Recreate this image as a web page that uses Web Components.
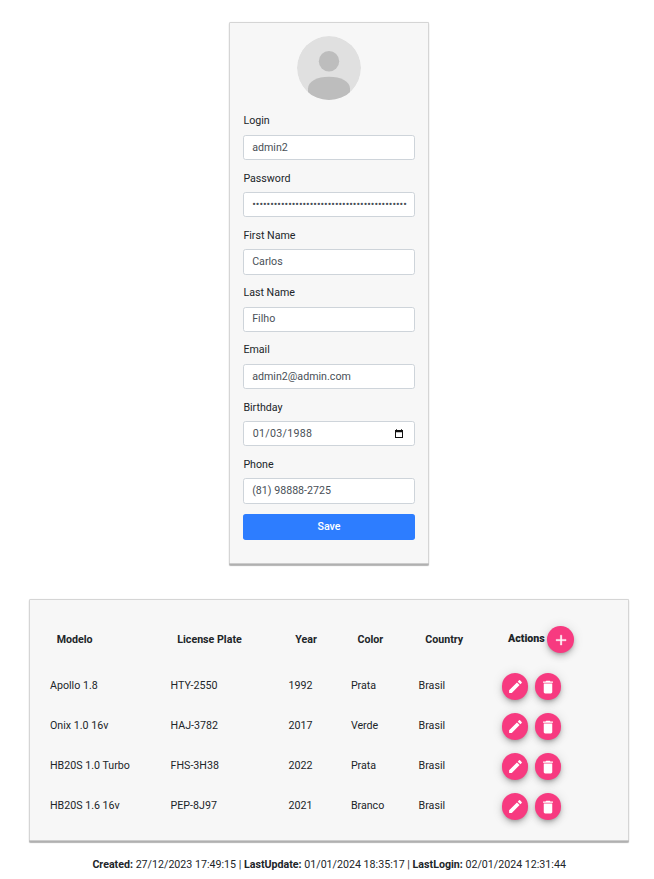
<!DOCTYPE html>
<html lang="en">
<head>
<meta charset="utf-8">
<title>Profile</title>
<style>
body{margin:0;background:#fff;color:#212529;font:10.667px/16px Roboto,sans-serif}
</style>
</head>
<body>
<profile-page></profile-page>
<script>
const define = (name, html, setup) => customElements.define(name, class extends HTMLElement {
  connectedCallback() {
    if (this.shadowRoot) return;
    const root = this.attachShadow({mode: 'open'});
    root.innerHTML = html;
    if (setup) setup(this, root);
  }
});

define('surface-card', `<style>
:host{display:block;box-sizing:border-box;background:#f7f7f7;border:1px solid #d5d5d5;border-bottom-color:#ccc;border-radius:1.5px;box-shadow:0 1.6px 1px rgba(0,0,0,.3),0 0 1px rgba(0,0,0,.12)}
</style><slot></slot>`);

define('user-avatar', `<style>
:host{display:block;width:64px;height:64px;border-radius:50%;overflow:hidden}
svg{display:block}
</style><svg width="64" height="64" viewBox="0 0 64 64"><circle cx="32" cy="32" r="32" fill="#e0e0e0"/><circle cx="32" cy="25.2" r="10.2" fill="#bdbdbd"/><path d="M11 64V52.5C11 45.5 20 40.8 32 40.8S53 45.5 53 52.5V64Z" fill="#bdbdbd"/></svg>`);

define('form-field', `<style>
:host{display:block;margin-bottom:10.58px}
.label{margin-bottom:5.33px;padding-left:.4px}
.box{box-sizing:border-box;height:25.33px;border:1px solid #ced4da;border-radius:2.67px;background:#fff;color:#495057;padding:.6px 8px 0 8.2px;display:flex;align-items:center;justify-content:space-between;white-space:nowrap;overflow:hidden}
:host([label="Birthday"]) span{letter-spacing:.3px;padding-left:.5px}
:host([label="Password"]) span{padding-top:1px}
</style><div class="label"></div><div class="box"><span><slot></slot></span><slot name="icon"></slot></div>`,
(el, r) => r.querySelector('.label').textContent = el.getAttribute('label'));

define('calendar-icon', `<style>:host{display:block;margin-right:2px}svg{display:block}</style>
<svg width="10" height="10" viewBox="0 0 10 10"><path d="M1 1H9V9H1Z" fill="#111"/><path d="M2 3.3H8V8H2Z" fill="#fff"/><path d="M2 .3h1V1H2zM7 .3h1V1H7z" fill="#111"/></svg>`);

define('save-button', `<style>
:host{display:flex;align-items:center;justify-content:center;height:26px;box-sizing:border-box;padding-bottom:1px;border-radius:2.67px;background:#2d7dff;color:#fff;font-weight:500}
</style><slot></slot>`);

const icons = {
  add: 'M19 13h-6v6h-2v-6H5v-2h6V5h2v6h6v2z',
  edit: 'M3 17.25V21h3.75L17.81 9.94l-3.75-3.75L3 17.25zM20.71 7.04a1 1 0 0 0 0-1.41l-2.34-2.34a1 1 0 0 0-1.41 0l-1.83 1.83 3.75 3.75 1.83-1.83z',
  remove: 'M6 19c0 1.1.9 2 2 2h8c1.1 0 2-.9 2-2V7H6v12zM19 4h-3.5l-1-1h-5l-1 1H5v2h14V4z'
};
define('round-button', `<style>
:host{display:flex;flex:none;align-items:center;justify-content:center;width:26.67px;height:26.67px;border-radius:50%;background:#f73a80;box-shadow:0 2px 3.3px -.67px rgba(0,0,0,.2),0 4px 6.67px rgba(0,0,0,.14),0 .67px 12px rgba(0,0,0,.12)}
:host([icon="remove"]) svg{padding:.6px 0 0 .5px}
:host([icon="add"]) svg{padding:.6px 0 0 .6px}
svg{display:block;flex:none}
</style><svg width="17" height="17" viewBox="0 0 24 24"><path fill="#fff"/></svg>`,
(el, r) => {
  const path = r.querySelector('path');
  path.setAttribute('d', icons[el.getAttribute('icon')]);
  if (el.getAttribute('icon') === 'add') { path.setAttribute('stroke', '#fff'); path.setAttribute('stroke-width', '.5'); }
});

define('profile-form', `<style>
surface-card{width:200px;height:542px;padding:13px}
user-avatar{margin:0 auto 13.48px}
</style><surface-card><user-avatar></user-avatar>
<form-field label="Login">admin2</form-field>
<form-field label="Password">${'•'.repeat(43)}</form-field>
<form-field label="First Name">Carlos</form-field>
<form-field label="Last Name">Filho</form-field>
<form-field label="Email">admin2@admin.com</form-field>
<form-field label="Birthday">01/03/1988<calendar-icon slot="icon"></calendar-icon></form-field>
<form-field label="Phone">(81) 98888-2725</form-field>
<save-button>Save</save-button></surface-card>`);

define('vehicle-table', `<style>
surface-card{width:600px;height:242px;padding:19.5px 20px}
.row{display:grid;grid-template-columns:120.6px 118px 62.3px 67.7px 83.2px 1fr;align-items:center;height:40px}
.row>span{padding-bottom:2.6px}
.head{font-weight:700;height:40px;margin-bottom:7.3px}
.head>*{padding-left:6.67px}
.head>span{padding-bottom:0}
.actions{display:flex;align-items:center;gap:6.4px}
.head .actions{gap:2.2px;padding-left:6.2px}
.head b{padding-bottom:2px}
</style><surface-card>
<div class="row head"><span>Modelo</span><span>License Plate</span><span>Year</span><span>Color</span><span>Country</span><div class="actions"><b>Actions</b><round-button icon="add"></round-button></div></div>
${[['Apollo 1.8','HTY-2550','1992','Prata'],['Onix 1.0 16v','HAJ-3782','2017','Verde'],['HB20S 1.0 Turbo','FHS-3H38','2022','Prata'],['HB20S 1.6 16v','PEP-8J97','2021','Branco']].map(v =>
`<div class="row">${[...v,'Brasil'].map(c => `<span>${c}</span>`).join('')}<div class="actions"><round-button icon="edit"></round-button><round-button icon="remove"></round-button></div></div>`).join('')}
</surface-card>`);

define('profile-page', `<style>
:host{display:flex;flex-direction:column;align-items:center;box-sizing:border-box;width:654px;height:879px;padding:22px 0 0 4px;overflow:hidden}
vehicle-table{margin-top:35px}
footer{margin-top:16px;padding-left:.3px;white-space:pre}
</style><profile-form></profile-form><vehicle-table></vehicle-table>
<footer><b>Created:</b> 27/12/2023 17:49:15 | <b>LastUpdate:</b> 01/01/2024 18:35:17 | <b>LastLogin:</b> 02/01/2024 12:31:44</footer>`);
</script>
</body>
</html>
